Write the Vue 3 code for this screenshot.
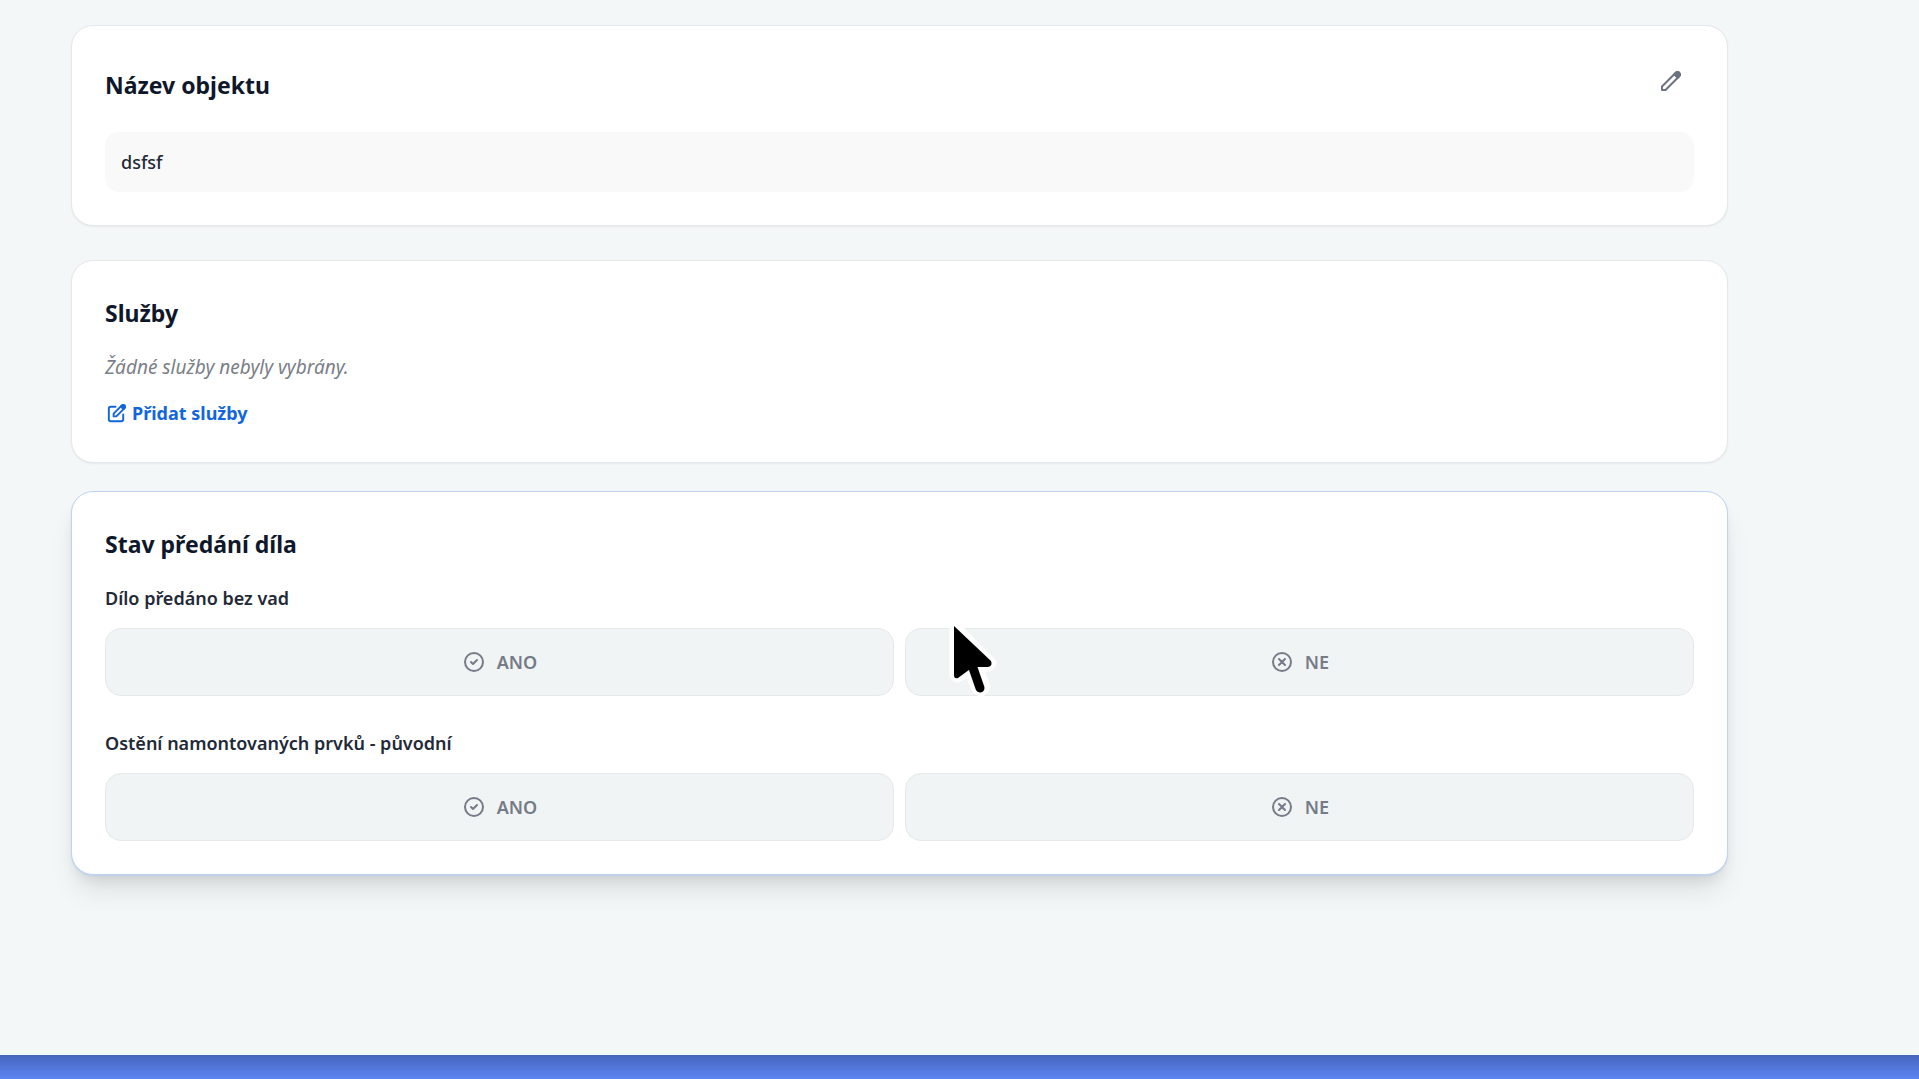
<script setup>
import { ref } from 'vue';

const objectName = ref('dsfsf');

const questions = ref([
  { id: 'bez-vad', label: 'Dílo předáno bez vad', answer: null },
  { id: 'osteni', label: 'Ostění namontovaných prvků - původní', answer: null },
]);

const setAnswer = (question, value) => {
  question.answer = value;
};
</script>

<template>
  <div class="page">
    <main class="content">
      <section class="card card-name">
        <div class="card-head">
          <h2>Název objektu</h2>
          <button type="button" class="icon-btn" aria-label="Upravit název objektu">
            <svg width="24" height="24" viewBox="0 0 24 24" fill="none" stroke="currentColor" stroke-width="2" stroke-linecap="round" stroke-linejoin="round">
              <path d="M15.232 5.232l3.536 3.536m-2.036-5.036a2.5 2.5 0 113.536 3.536L6.5 21.036H3v-3.572L16.732 3.732z" />
              <path d="M15.5 5l3.5 3.5 1.3-1.3a2.5 2.5 0 00-3.5-3.5z" fill="currentColor" />
            </svg>
          </button>
        </div>
        <div class="value">{{ objectName }}</div>
      </section>

      <section class="card card-services">
        <h2>Služby</h2>
        <p class="empty">Žádné služby nebyly vybrány.</p>
        <button type="button" class="link-btn">
          <svg width="23" height="23" viewBox="0 0 24 24" fill="none" stroke="currentColor" stroke-width="2" stroke-linecap="round" stroke-linejoin="round">
            <path d="M11 5H6a2 2 0 00-2 2v11a2 2 0 002 2h11a2 2 0 002-2v-5m-1.414-9.414a2 2 0 112.828 2.828L11.828 15H9v-2.828l8.586-8.586z" />
            <path d="M16.5 4.7l2.8 2.8 1.1-1.1a2 2 0 00-2.8-2.8z" fill="currentColor" />
          </svg>
          <span>Přidat služby</span>
        </button>
      </section>

      <section class="card card-status">
        <h2>Stav předání díla</h2>
        <div v-for="question in questions" :key="question.id" class="question" role="group" :aria-labelledby="question.id">
          <p :id="question.id" class="question-label">{{ question.label }}</p>
          <div class="answers">
            <button type="button" class="answer" :class="{ active: question.answer === true }" @click="setAnswer(question, true)">
              <svg width="24" height="24" viewBox="0 0 24 24" fill="none" stroke="currentColor" stroke-width="2" stroke-linecap="round" stroke-linejoin="round">
                <path d="M9 12l2 2 4-4m6 2a9 9 0 11-18 0 9 9 0 0118 0z" />
              </svg>
              <span>ANO</span>
            </button>
            <button type="button" class="answer" :class="{ active: question.answer === false }" @click="setAnswer(question, false)">
              <svg width="24" height="24" viewBox="0 0 24 24" fill="none" stroke="currentColor" stroke-width="2" stroke-linecap="round" stroke-linejoin="round">
                <path d="M9 9l6 6m0-6l-6 6m12-3a9 9 0 11-18 0 9 9 0 0118 0z" />
              </svg>
              <span>NE</span>
            </button>
          </div>
        </div>
      </section>
    </main>
    <footer class="bottom-bar"></footer>

    <svg class="pointer" width="54" height="80" viewBox="0 0 54 80" aria-hidden="true">
      <g stroke-linejoin="round" stroke-linecap="round">
        <path d="M7 7L43 43L41 46H29L37 67L33 71L29 69L21 51L9 57L7 55Z" fill="#fff" stroke="#fff" stroke-width="11" />
        <path d="M24 45L32 68" fill="none" stroke="#000" stroke-width="9" />
        <path d="M6 6L43 41Q45 46 40 47H25L10 58Q6 59 6 55Z" fill="#000" />
      </g>
    </svg>
  </div>
</template>

<style>
body {
  margin: 0;
  background: #f3f7f8;
}
</style>

<style scoped>
.page {
  display: flex;
  flex-direction: column;
  min-height: 100vh;
  font-family: "Noto Sans", "Open Sans", sans-serif;
  color: #1f2937;
}

.content {
  flex: 1;
  margin-right: 191px;
  padding: 25px 0 0 71px;
}

.card {
  padding: 32px 33px 33px;
  background: #fff;
  border: 1px solid #e4e8ea;
  border-radius: 22px;
  box-shadow: 0 1px 2px rgba(0, 0, 0, 0.06);
}

.card-services {
  margin-top: 34px;
}

.card-status {
  margin-top: 28px;
  border-color: #bfd3f0;
  box-shadow: 0 1px 1px #c3d0ea, 0 20px 28px -6px rgba(0, 0, 0, 0.1), 0 8px 14px -5px rgba(0, 0, 0, 0.1);
}

h2 {
  margin: 0;
  font-size: 23px;
  line-height: 40px;
  font-weight: 700;
  color: #0f172a;
}

.card-head {
  display: flex;
  justify-content: space-between;
  align-items: flex-start;
  margin-bottom: 20px;
}

.card-head h2 {
  line-height: 54px;
}

button {
  font-family: inherit;
  cursor: pointer;
}

.icon-btn {
  display: flex;
  padding: 11px;
  border: 0;
  background: none;
  color: #6b7280;
}

.value {
  padding: 16px;
  border-radius: 14px;
  background: #f9f9f9;
  font-size: 18px;
  line-height: 28px;
  font-weight: 500;
}

.empty {
  margin: 20px 0 18px;
  font-size: 19px;
  line-height: 28px;
  font-style: italic;
  color: #7b8087;
}

.link-btn {
  display: flex;
  align-items: center;
  gap: 4px;
  padding: 0;
  border: 0;
  background: none;
  color: #1166dd;
  font-size: 18px;
  line-height: 28px;
  font-weight: 700;
}

.card-services .link-btn {
  margin-bottom: 2px;
}

.question {
  margin-top: 20px;
}

.question + .question {
  margin-top: 33px;
}

.question-label {
  margin: 0 0 16px;
  font-size: 18px;
  line-height: 28px;
  font-weight: 600;
}

.answers {
  display: grid;
  grid-template-columns: 1fr 1fr;
  gap: 11px;
}

.answer {
  display: flex;
  justify-content: center;
  align-items: center;
  gap: 11px;
  padding: 19px;
  border: 1px solid #e5e9ea;
  border-radius: 16px;
  background: #f1f4f4;
  color: #757b87;
  font-size: 18px;
  line-height: 28px;
  font-weight: 600;
}

.answer.active {
  border-color: #1166dd;
  color: #1166dd;
}

.bottom-bar {
  height: 24px;
  background: linear-gradient(#4665bd, #5c85f2);
}

.pointer {
  position: absolute;
  top: 620px;
  left: 948px;
}
</style>
